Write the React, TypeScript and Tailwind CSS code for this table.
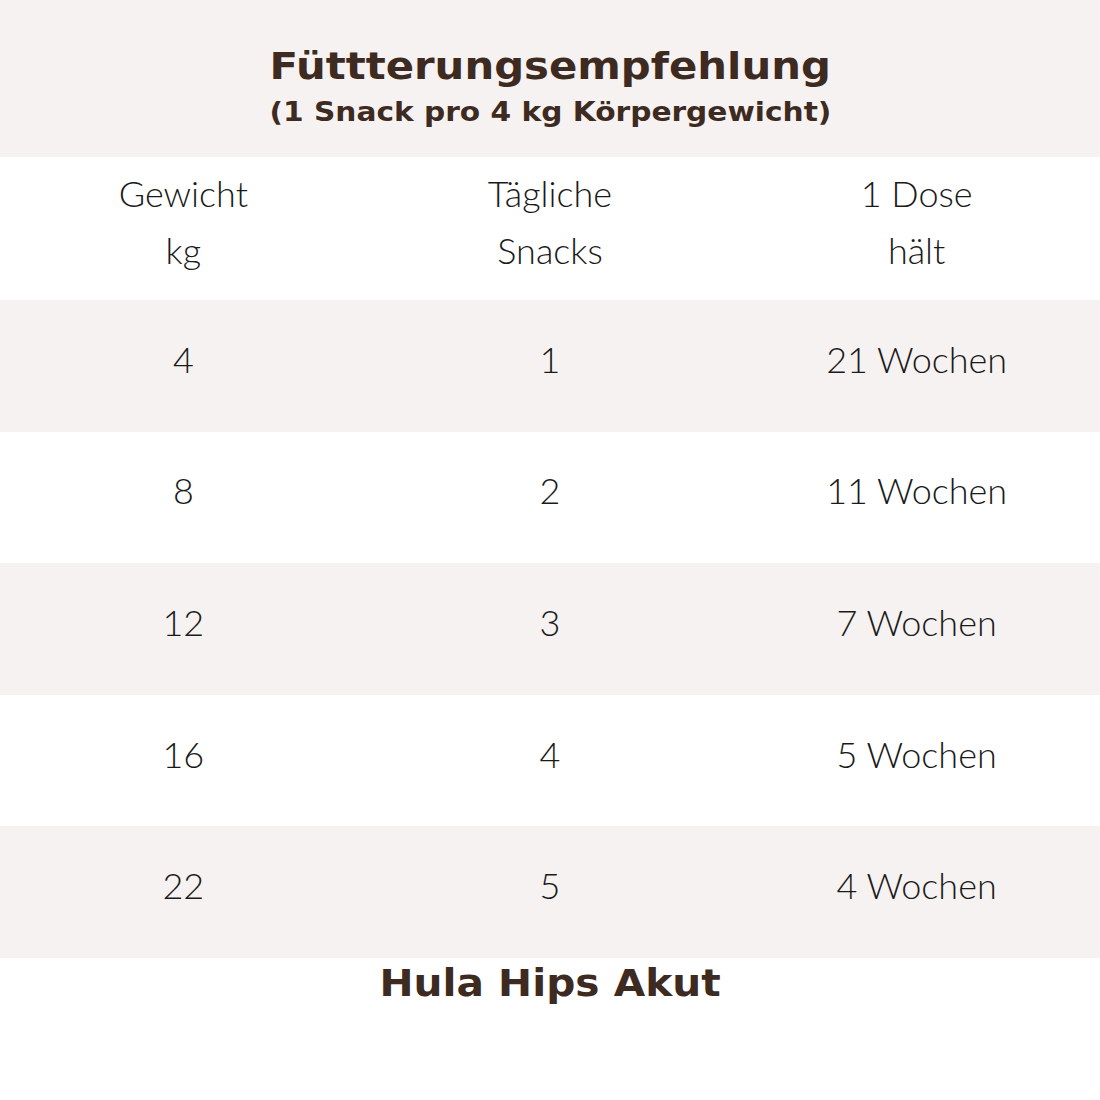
import React from "react";

const rows = [
  ["4", "1", "21 Wochen"],
  ["8", "2", "11 Wochen"],
  ["12", "3", "7 Wochen"],
  ["16", "4", "5 Wochen"],
  ["22", "5", "4 Wochen"],
];

export default function App() {
  const body = { fontFamily: "Lato, 'Open Sans', sans-serif" };
  const title = { fontFamily: "'DejaVu Sans', Verdana, sans-serif" };
  return (
    <div className="w-[1100px] h-[1100px] bg-white flex flex-col">
      <div className="h-[157px] bg-[#f6f2f1] flex flex-col items-center pt-[44px] text-[#3d2a20]" style={title}>
        <div className="inline-block text-[38px] font-bold leading-[44px] scale-x-[1.1]">Füttterungsempfehlung</div>
        <div className="inline-block mt-[6px] text-[26px] font-bold leading-[36px] scale-x-[1.14]">(1 Snack pro 4 kg Körpergewicht)</div>
      </div>
      <div className="h-[143px] grid grid-cols-3 items-center pb-[14px] text-[#1a1a1a] font-light text-[36px] leading-[57px]" style={body}>
        <div className="text-center">Gewicht<br />kg</div>
        <div className="text-center">Tägliche<br />Snacks</div>
        <div className="text-center">1 Dose<br />hält</div>
      </div>
      {rows.map((r, i) => (
        <div
          key={i}
          className={`${i % 2 === 0 ? "bg-[#f6f2f1]" : "bg-white"} h-[131.6px] grid grid-cols-3 items-center pb-[14px] text-[#1a1a1a] font-light text-[36px]`}
          style={body}
        >
          {r.map((c, j) => (
            <div key={j} className="text-center">{c}</div>
          ))}
        </div>
      ))}
      <div className="pt-[4px] flex justify-center text-[#3d2a20]" style={title}>
        <span className="inline-block text-[37px] leading-[44px] font-bold scale-x-[1.1]">Hula Hips Akut</span>
      </div>
    </div>
  );
}
